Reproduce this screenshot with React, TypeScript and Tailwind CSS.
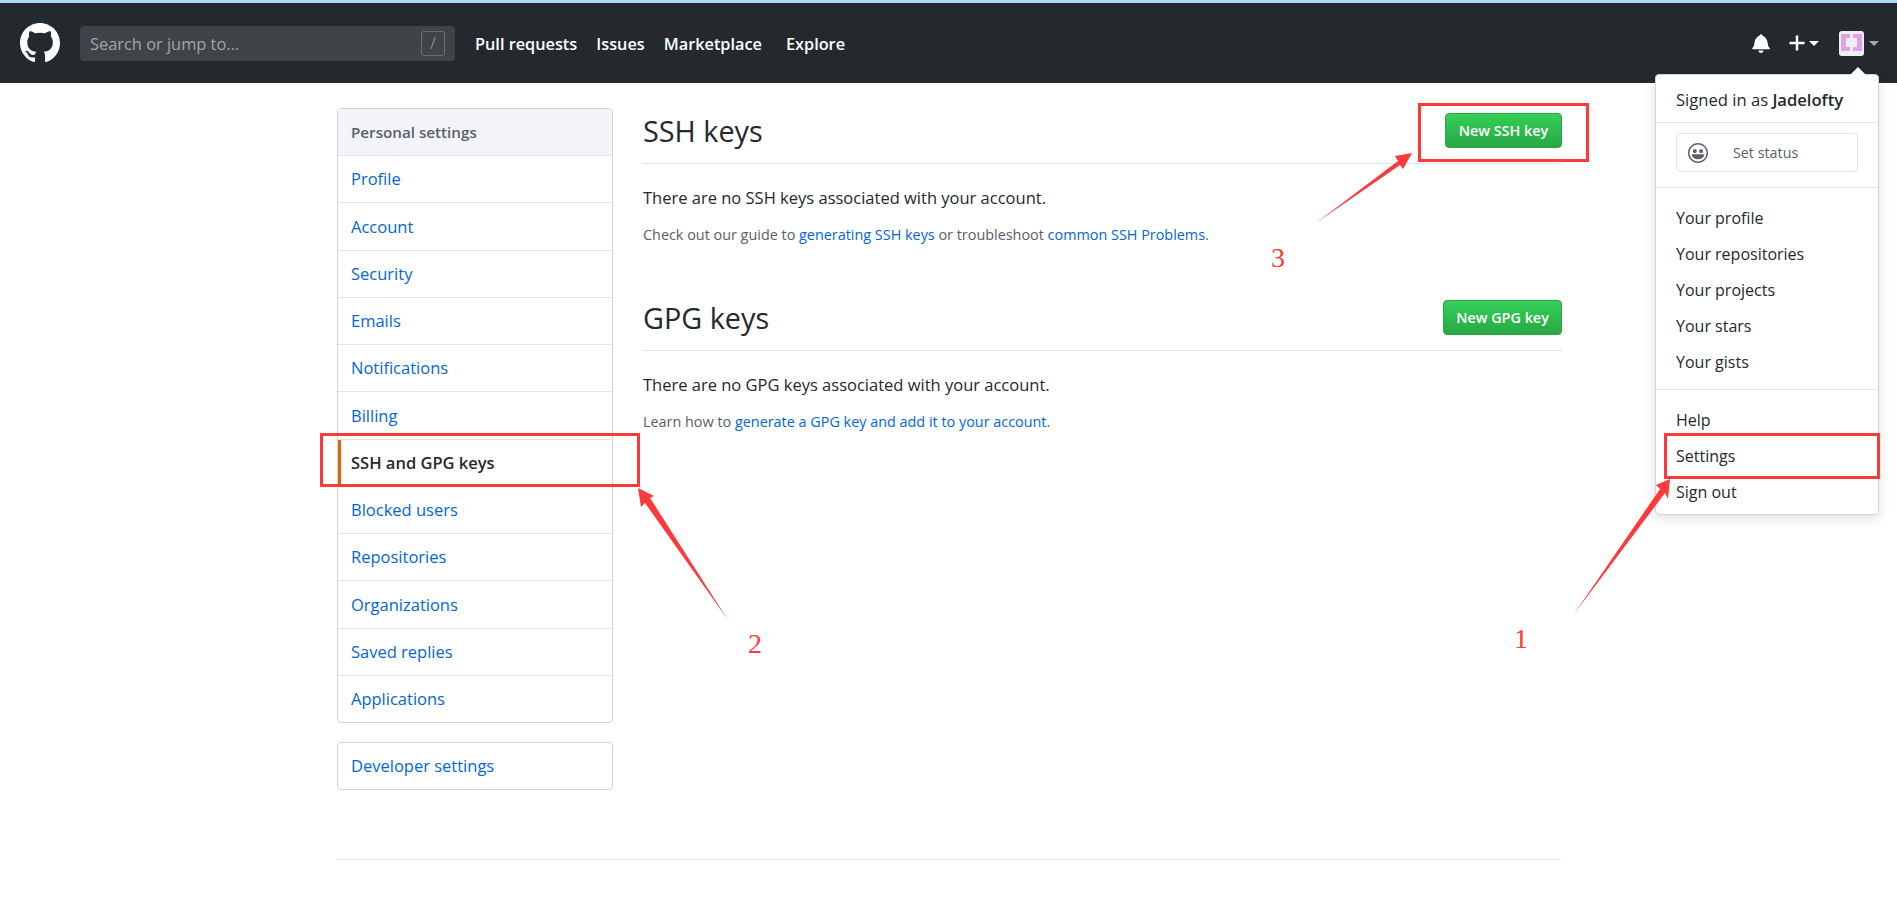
const sideLinks = ['Profile', 'Account', 'Security', 'Emails', 'Notifications', 'Billing']
const sideLinksAfter = ['Blocked users', 'Repositories', 'Organizations', 'Saved replies', 'Applications']
const navLinks = [
  { label: 'Pull requests', className: 'mr-[19px]' },
  { label: 'Issues', className: 'mr-[19px]' },
  { label: 'Marketplace', className: 'mr-[24px]' },
  { label: 'Explore', className: '' },
]
const menuOne = ['Your profile', 'Your repositories', 'Your projects', 'Your stars', 'Your gists']
const menuTwo = ['Help', 'Settings', 'Sign out']

function SideRow({ label }: { label: string }) {
  return (
    <a className="flex items-center h-[47.25px] pl-[13px] pt-[1px] border-t border-[#e1e4e8] text-[#0366d6] text-[16.5px]">
      {label}
    </a>
  )
}

function Caret({ className }: { className: string }) {
  return <span className={`w-0 h-0 border-x-[5px] border-x-transparent border-t-[5px] ${className}`} />
}

function KeySection({
  title,
  button,
  buttonWidth,
  message,
  children,
}: {
  title: string
  button: string
  buttonWidth: string
  message: string
  children: React.ReactNode
}) {
  return (
    <section>
      <div className="flex items-center justify-between h-[56px] border-b border-[#e1e4e8]">
        <h2 className="text-[28.8px] leading-[36px] text-[#24292e] mb-[9px]">{title}</h2>
        <button className={`${buttonWidth} h-[35px] mb-[10px] rounded-[4px] border border-[#28a745] bg-gradient-to-b from-[#34d058] to-[#28a745] text-white text-[14.4px] font-semibold`}>
          {button}
        </button>
      </div>
      <p className="mt-[23px] text-[16.5px] leading-[22px] text-[#24292e]">{message}</p>
      <p className="mt-[16px] text-[14.4px] leading-[20px] text-[#586069]">{children}</p>
    </section>
  )
}

export default function App() {
  return (
    <div className="relative h-[908px] overflow-hidden bg-white font-['Open_Sans','Noto_Sans',sans-serif]">
      <div className="h-[3px] bg-[#a9d9f5]" />
      <header className="flex items-center h-[80px] bg-[#24292e] pl-[20px] pr-[18px]">
        <svg viewBox="0 0 16 16" className="w-[40px] h-[40px] fill-white mr-[20px]">
          <path d="M8 0C3.58 0 0 3.58 0 8c0 3.54 2.29 6.53 5.47 7.59.4.07.55-.17.55-.38 0-.19-.01-.82-.01-1.49-2.01.37-2.53-.49-2.69-.94-.09-.23-.48-.94-.82-1.13-.28-.15-.68-.52-.01-.53.63-.01 1.08.58 1.23.82.72 1.21 1.87.87 2.33.66.07-.52.28-.87.51-1.07-1.78-.2-3.64-.89-3.64-3.95 0-.87.31-1.59.82-2.15-.08-.2-.36-1.02.08-2.12 0 0 .67-.21 2.2.82.64-.18 1.32-.27 2-.27.68 0 1.36.09 2 .27 1.53-1.04 2.2-.82 2.2-.82.44 1.1.16 1.92.08 2.12.51.56.82 1.27.82 2.15 0 3.07-1.87 3.75-3.65 3.95.29.25.54.73.54 1.48 0 1.07-.01 1.93-.01 2.2 0 .21.15.46.55.38A8.013 8.013 0 0016 8c0-4.42-3.58-8-8-8z" />
        </svg>
        <div className="flex items-center justify-between w-[375px] h-[35px] mr-[20px] pl-[10px] pr-[10px] rounded-[4px] bg-[#3f4448] text-[#a3a6a8] text-[16.4px]">
          <span className="pt-[3px]">Search or jump to...</span>
          <span className="flex items-center justify-center w-[24px] h-[25px] rounded-[3px] border border-[#6a6f73] text-[16px] font-light text-[#a3a6a8]">/</span>
        </div>
        <nav className="flex items-center pt-[3px] text-white text-[16.3px] font-semibold">
          {navLinks.map((link) => (
            <a key={link.label} className={link.className}>{link.label}</a>
          ))}
        </nav>
        <div className="ml-auto flex items-center">
          <svg viewBox="0 0 14 16" className="w-[18px] h-[20px] fill-white mr-[19px]">
            <path d="M14 12v1H0v-1l.73-.58c.77-.77.81-2.55 1.19-4.42C2.69 3.23 6 2 6 2c0-.55.45-1 1-1s1 .45 1 1c0 0 3.39 1.23 4.16 5 .38 1.88.42 3.66 1.19 4.42l.66.58H14zm-7 4c1.11 0 2-.89 2-2H5c0 1.11.89 2 2 2z" />
          </svg>
          <svg viewBox="0 0 12 16" className="w-[16px] h-[20px] fill-white mr-[4px]">
            <path d="M12 9H7v5H5V9H0V7h5V2h2v5h5v2z" />
          </svg>
          <Caret className="border-t-white mr-[20px]" />
          <svg viewBox="0 0 25 25" className="w-[25px] h-[25px] mr-[5px]">
            <rect width="25" height="25" rx="3" fill="#f0eef0" />
            <path fill="#e0a2e6" d="M2 3h9v4H7v9h4v4H2zM23 3h-9v4h4v9h-4v4h9z" />
          </svg>
          <Caret className="border-t-[#a3a6a8]" />
        </div>
      </header>

      <main className="flex ml-[337px] w-[1225px] pt-[25px]">
        <aside className="w-[276px] mr-[30px] shrink-0">
          <div className="rounded-[4px] border border-[#d1d5da] overflow-hidden">
            <div className="flex items-center h-[46px] pl-[13px] bg-[#f3f4f7] text-[#586069] text-[15.2px] font-semibold">Personal settings</div>
            {sideLinks.map((label) => <SideRow key={label} label={label} />)}
            <div className="relative flex items-center h-[47.25px] pl-[13px] pt-[1px] border-t border-[#e1e4e8] text-[#24292e] text-[16.5px] font-semibold">
              <span className="absolute left-0 top-0 bottom-0 w-[3px] bg-[#e36209]" />
              SSH and GPG keys
            </div>
            {sideLinksAfter.map((label) => <SideRow key={label} label={label} />)}
          </div>
          <div className="flex items-center h-[48px] mt-[19px] pl-[13px] pt-[1px] rounded-[4px] border border-[#d1d5da] text-[#0366d6] text-[16.5px]">
            Developer settings
          </div>
        </aside>

        <div className="flex-1">
          <KeySection title="SSH keys" button="New SSH key" buttonWidth="w-[117px]" message="There are no SSH keys associated with your account.">
            Check out our guide to <a className="text-[#0366d6]">generating SSH keys</a> or troubleshoot <a className="text-[#0366d6]">common SSH Problems</a>.
          </KeySection>
          <div className="h-[50px]" />
          <KeySection title="GPG keys" button="New GPG key" buttonWidth="w-[119px]" message="There are no GPG keys associated with your account.">
            Learn how to <a className="text-[#0366d6]">generate a GPG key and add it to your account</a>.
          </KeySection>
        </div>
      </main>

      <div className="ml-[337px] w-[1225px] mt-[69px] border-t border-[#eaecef]" />

      {/* user dropdown */}
      <div className="absolute left-[1655px] top-[74px] w-[224px] rounded-[4px] border border-[#d1d5da] bg-white shadow-[0_3px_12px_rgba(27,31,35,0.15)] text-[#24292e] text-[16px]">
        <span className="absolute -top-[8px] right-[12px] w-0 h-0 border-x-[8px] border-x-transparent border-b-[8px] border-b-white" />
        <div className="flex items-center h-[48px] pl-[20px] pt-[4px] border-b border-[#e1e4e8] text-[16.6px]">
          Signed in as&nbsp;<span className="font-semibold">Jadelofty</span>
        </div>
        <div className="px-[20px] pt-[10px] pb-[15px] border-b border-[#e1e4e8]">
          <div className="flex items-center h-[39px] rounded-[4px] border border-[#e1e4e8] pl-[11px] text-[#586069] text-[14.3px]">
            <svg viewBox="0 0 16 16" className="w-[20px] h-[20px] fill-[#586069] mr-[25px]">
              <path d="M8 0C3.58 0 0 3.58 0 8s3.58 8 8 8 8-3.58 8-8-3.58-8-8-8zm4.81 12.81a6.72 6.72 0 01-2.17 1.45c-.83.36-1.72.53-2.64.53-.92 0-1.81-.17-2.64-.53-.81-.34-1.55-.83-2.17-1.45a6.773 6.773 0 01-1.45-2.17A6.59 6.59 0 011.21 8c0-.92.17-1.81.53-2.64.34-.81.83-1.55 1.45-2.17.62-.62 1.36-1.11 2.17-1.45A6.59 6.59 0 018 1.21c.92 0 1.81.17 2.64.53.81.34 1.55.83 2.17 1.45.62.62 1.11 1.36 1.45 2.17.36.83.53 1.72.53 2.64 0 .92-.17 1.81-.53 2.64-.34.81-.83 1.55-1.45 2.17zM4 6.8v-.59c0-.66.53-1.19 1.2-1.19h.59c.66 0 1.19.53 1.19 1.19v.59c0 .67-.53 1.2-1.19 1.2H5.2C4.53 8 4 7.47 4 6.8zm5 0v-.59c0-.66.53-1.19 1.2-1.19h.59c.66 0 1.19.53 1.19 1.19v.59c0 .67-.53 1.2-1.19 1.2h-.59C9.53 8 9 7.47 9 6.8zm4 3.2c-.72 1.88-2.91 3-5 3s-4.28-1.13-5-3c-.14-.39.23-1 .66-1h8.59c.41 0 .89.61.75 1z" />
            </svg>
            <span className="pt-[1px]">Set status</span>
          </div>
        </div>
        <div className="pt-[12px] pb-[9px] border-b border-[#e1e4e8]">
          {menuOne.map((item) => (
            <div key={item} className="flex items-center h-[36px] pl-[20px]">{item}</div>
          ))}
        </div>
        <div className="pt-[12px] pb-[4px]">
          {menuTwo.map((item) => (
            <div key={item} className="flex items-center h-[36px] pl-[20px]">{item}</div>
          ))}
        </div>
      </div>

      {/* red annotations drawn over the screenshot */}
      <div className="absolute left-[320px] top-[433px] w-[320px] h-[54px] border-[3px] border-[#fd3a3a]" />
      <div className="absolute left-[1418px] top-[103px] w-[171px] h-[59px] border-[3px] border-[#fd3a3a]" />
      <div className="absolute left-[1664px] top-[433px] w-[216px] h-[46px] border-[3px] border-[#fd3a3a]" />
      <svg className="absolute left-0 top-0 pointer-events-none" width="1897" height="908" viewBox="0 0 1897 908">
        <polygon fill="#fd3a3a" points="1574,614 1660,489 1656,485 1670,479 1668,499 1665,493" />
        <polygon fill="#fd3a3a" points="728,620 645,503 641,507 638,488 654,496 650,498" />
        <polygon fill="#fd3a3a" points="1316,223 1398,161 1395,156 1412,153 1403,169 1400,165" />
      </svg>
      <span className="absolute left-[1514px] top-[622px] text-[28px] leading-[34px] text-[#fd3a3a] font-['Liberation_Serif',serif]">1</span>
      <span className="absolute left-[748px] top-[627px] text-[28px] leading-[34px] text-[#fd3a3a] font-['Liberation_Serif',serif]">2</span>
      <span className="absolute left-[1271px] top-[241px] text-[28px] leading-[34px] text-[#fd3a3a] font-['Liberation_Serif',serif]">3</span>
    </div>
  )
}
